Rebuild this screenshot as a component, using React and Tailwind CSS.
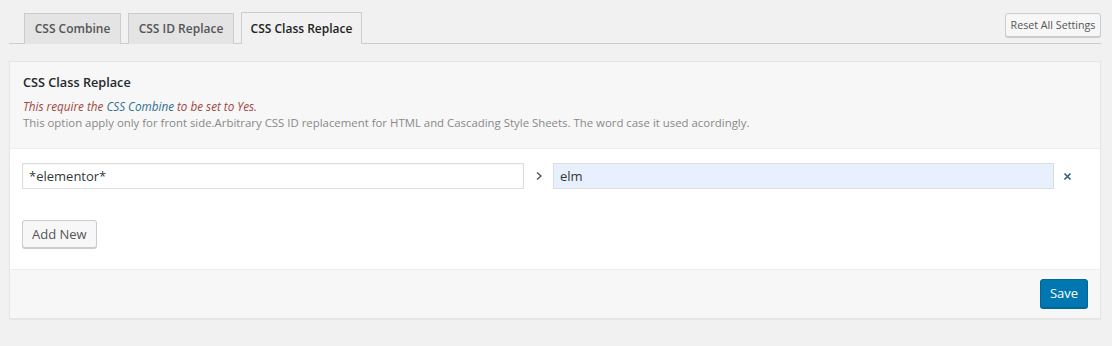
export default function App() {
  const font = { fontFamily: '"Open Sans", "Noto Sans", sans-serif' };
  return (
    <div className="w-[1112px] h-[346px] bg-[#f1f1f1] text-[#444] text-[12px]" style={font}>
      <div className="pt-[13px] pl-[9px] pr-[11px]">
        <div className="flex items-end justify-between border-b border-[#ccc] h-[31px]">
          <div className="flex items-end pl-[15px] gap-[7px]">
            <div className="h-[31px] w-[97px] flex items-center justify-center bg-[#e4e4e4] border border-[#ccc] border-b-0 font-semibold text-[#555] text-[12px] mb-[-1px] pb-px">CSS Combine</div>
            <div className="h-[31px] w-[106px] flex items-center justify-center bg-[#e4e4e4] border border-[#ccc] border-b-0 font-semibold text-[#555] text-[12px] mb-[-1px] pb-px">CSS ID Replace</div>
            <div className="h-[32px] w-[121px] flex items-center justify-center bg-[#f1f1f1] border border-[#ccc] border-b-0 font-semibold text-[#222] text-[12px] mb-[-1px]">CSS Class Replace</div>
          </div>
          <div className="self-start mb-auto">
            <button className="h-[24px] w-[96px] bg-[#f7f7f7] border border-[#ccc] rounded-[3px] shadow-[0_1px_0_#ccc] text-[10.7px] text-[#555] leading-none" style={font}>Reset All Settings</button>
          </div>
        </div>
      </div>
      <div className="mx-[9px] mt-[17px] w-[1092px] border border-[#e5e5e5] bg-[#f7f7f7] shadow-[0_1px_1px_rgba(0,0,0,0.04)]">
        <div className="px-[13px] pt-[11px] h-[86px]">
          <div className="font-semibold text-[12.7px] text-[#23282d] leading-[18px]">CSS Class Replace</div>
          <div className="mt-[7px] italic text-[11.7px] leading-[16px] text-[#a0473e]">
            This require the <span className="text-[#2f6f8f]">CSS Combine</span> to be set to Yes.
          </div>
          <div className="text-[11.4px] leading-[17px] text-[#888]">
            This option apply only for front side.Arbitrary CSS ID replacement for HTML and Cascading Style Sheets. The word case it used acordingly.
          </div>
        </div>
        <div className="bg-white border-t border-b border-[#eee] h-[122px] px-[12px] pt-[14px]">
          <div className="flex items-center">
            <input readOnly value="*elementor*" className="w-[502px] h-[26px] border border-[#ddd] px-[6px] text-[13px] text-[#32373c] bg-white outline-none shadow-[inset_0_1px_2px_rgba(0,0,0,0.05)]" style={font} />
            <div className="w-[29px] flex justify-center text-[#555]">
              <svg width="8" height="10" viewBox="0 0 8 10"><path d="M2 1.5 L6 5 L2 8.5" fill="none" stroke="#555" strokeWidth="1.4" /></svg>
            </div>
            <input readOnly value="elm" className="w-[501px] h-[26px] border border-[#ddd] px-[6px] text-[13px] text-[#32373c] bg-[#e8f0fe] outline-none" style={font} />
            <div className="w-[27px] flex justify-center">
              <svg width="9" height="9" viewBox="0 0 9 9"><path d="M1.5 1.5 L7.5 7.5 M7.5 1.5 L1.5 7.5" stroke="#2e5e84" strokeWidth="1.6" /></svg>
            </div>
          </div>
          <button className="mt-[31px] h-[28px] px-[9px] bg-[#f7f7f7] border border-[#ccc] rounded-[3px] shadow-[0_1px_0_#ccc] text-[13px] text-[#555] leading-none" style={font}>Add New</button>
        </div>
        <div className="h-[48px] flex items-center justify-end pr-[12px] pb-[1px]">
          <button className="h-[29px] w-[48px] bg-[#0077b0] border border-[#006799] rounded-[3px] shadow-[0_1px_0_#006799] text-[13px] text-white leading-none" style={font}>Save</button>
        </div>
      </div>
    </div>
  );
}
